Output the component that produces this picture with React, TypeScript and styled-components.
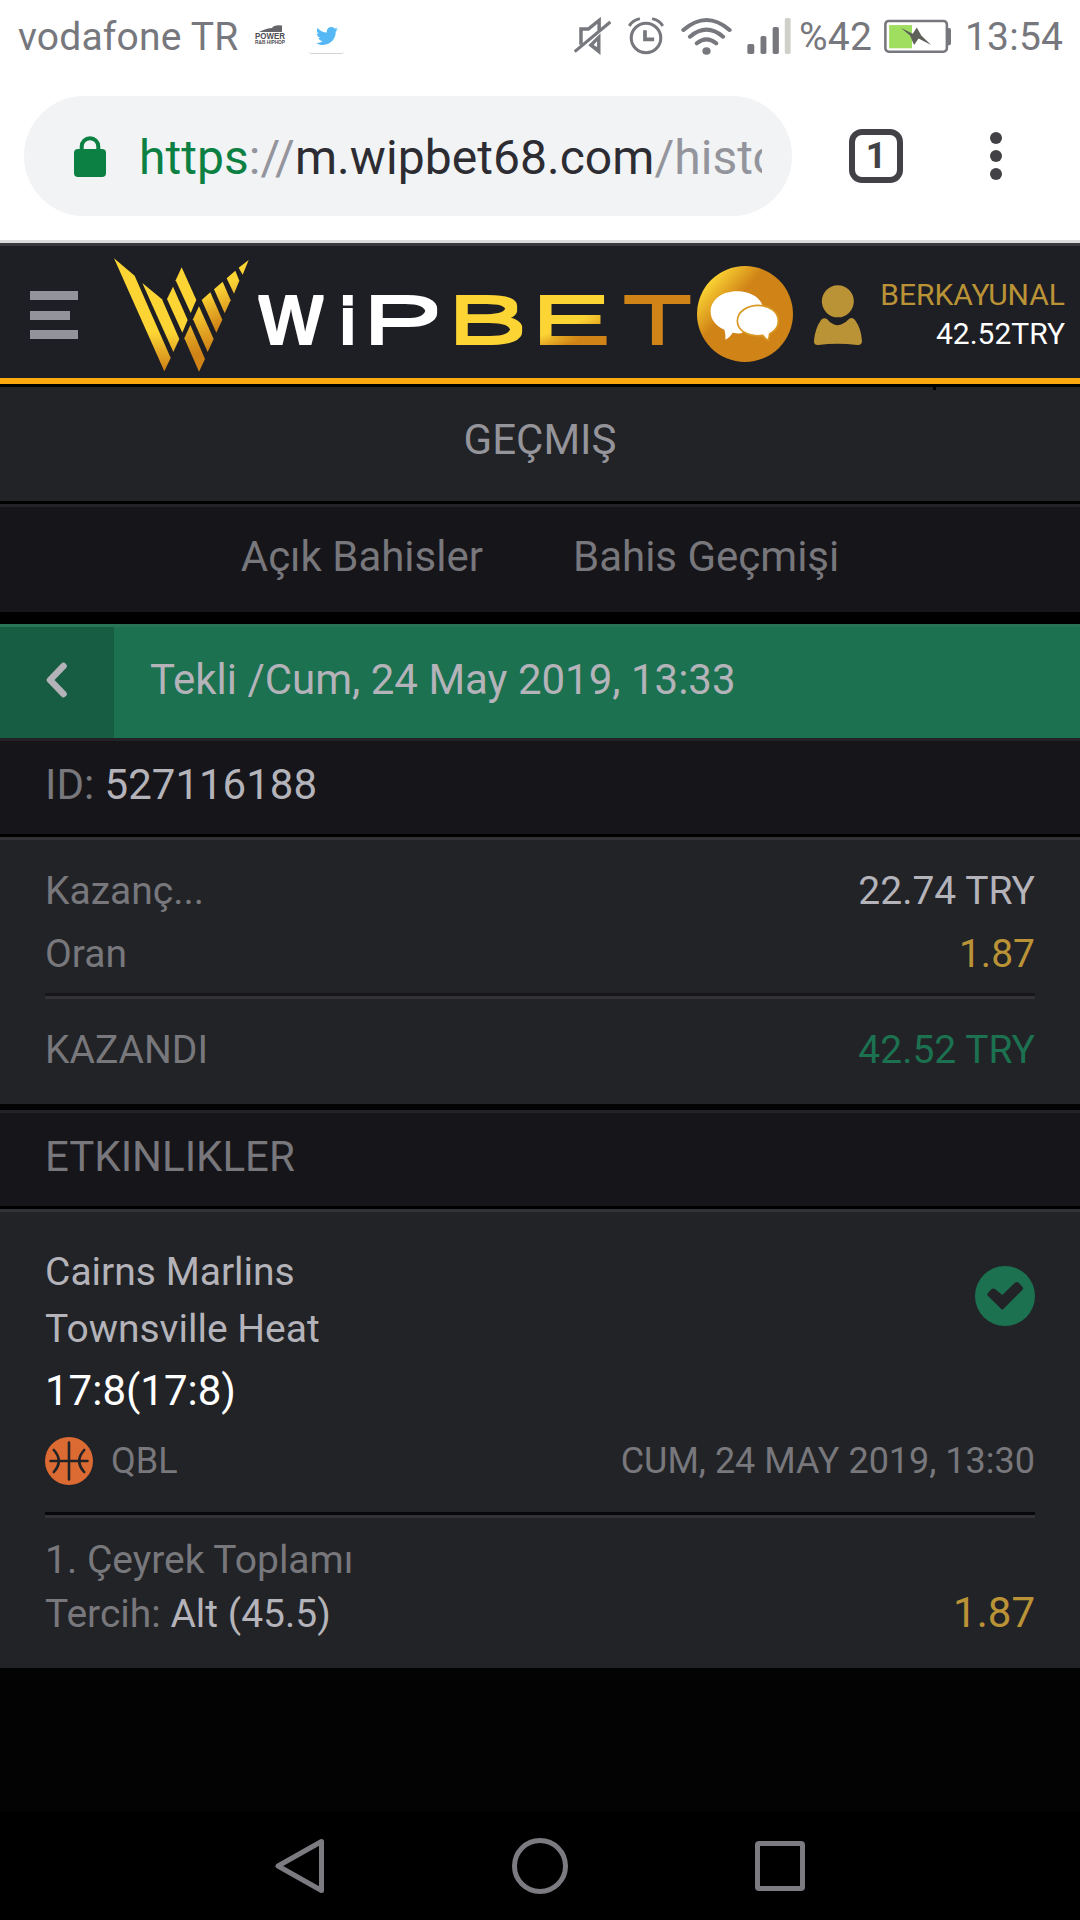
import React from "react";
import styled, { createGlobalStyle } from "styled-components";
import { FaTwitter } from "react-icons/fa";

const color = {
  ink: "#77777c",
  light: "#b4b3ba",
  gold: "#bb9337",
  green: "#1c7150",
  panel: "#222327",
  band: "#16151a",
  edge: "#323237",
  status: "#77787d",
};

const GlobalStyle = createGlobalStyle`
  * { box-sizing: border-box; }
  body { margin: 0; background: #030303; font-family: Roboto, "Liberation Sans", sans-serif; }
  svg { display: block; flex: none; }
`;

const Screen = styled.div`
  width: 1080px;
  height: 1920px;
  display: flex;
  flex-direction: column;
  background: #030303;
  overflow: hidden;
  white-space: nowrap;
`;

/* ---------- phone status bar ---------- */
const StatusBar = styled.div`
  height: 72px;
  display: flex;
  align-items: center;
  background: #fff;
  color: ${color.status};
  font-size: 39px;
  padding-left: 18px;
`;

const StatusItem = styled.div<{ $width: number; $left?: number }>`
  width: ${(p) => p.$width}px;
  margin-left: ${(p) => p.$left ?? 0}px;
  flex: none;
  display: flex;
`;

const StatusText = styled(StatusItem)`
  padding-top: 2px;
  line-height: 48px;
  letter-spacing: 0.2px;
`;

const TwitterTile = styled.div`
  width: 35px;
  height: 35px;
  margin-left: 22px;
  display: flex;
  align-items: center;
  justify-content: center;
  border-bottom: 1px solid #d4d4d4;
  border-radius: 3px;
  color: #55b8f5;
`;

/* ---------- browser bar ---------- */
const BrowserBar = styled.div`
  height: 168px;
  display: flex;
  align-items: center;
  padding-left: 24px;
  background: #fff;
`;

const AddressPill = styled.div`
  width: 768px;
  height: 120px;
  border-radius: 60px;
  background: #f1f3f5;
  display: flex;
  align-items: center;
  padding-left: 50px;
`;

const Address = styled.div`
  width: 623px;
  margin-left: 33px;
  overflow: hidden;
  font-size: 48px;
  line-height: 60px;
  letter-spacing: 0.05px;
  padding-top: 3px;
  color: #94959c;
`;

const Scheme = styled.span`
  color: #0c8043;
`;
const Host = styled.span`
  color: #2c2c32;
`;

const TabCount = styled.div`
  width: 54px;
  height: 54px;
  margin-left: 57px;
  border: 6px solid #424246;
  border-radius: 13px;
  color: #424246;
  font-size: 36px;
  font-weight: 700;
  line-height: 43px;
  text-align: center;
`;

const Dots = styled.div`
  margin-left: 87px;
  display: flex;
  flex-direction: column;
  gap: 6px;
`;
const Dot = styled.i`
  width: 12px;
  height: 12px;
  border-radius: 50%;
  background: #424246;
`;

/* ---------- site header ---------- */
const Header = styled.header`
  height: 147px;
  border-top: 3px solid #dcdcdc;
  border-bottom: 3px solid #000;
  background: linear-gradient(#38383d 3px, #1e1f24 3px, #1e1f24 135px, #fca90f 135px);
  display: flex;
  align-items: flex-start;
  flex: none;
`;

const Menu = styled.div`
  width: 48px;
  margin: 48px 0 0 30px;
  display: flex;
  flex-direction: column;
  gap: 10.5px;
`;
const MenuBar = styled.i<{ $width: number }>`
  width: ${(p) => p.$width}px;
  height: 9px;
  background: #92939b;
`;

const LogoSlot = styled.div`
  margin: -7px 0 0 32px;
`;
const ChatSlot = styled.div`
  margin: 23px 0 0 5px;
`;
const UserSlot = styled.div`
  margin: 42px 0 0 21px;
`;
const Account = styled.div`
  flex: 1;
  margin: 32px 15px 0 0;
  text-align: right;
  font-size: 30px;
  line-height: 39px;
`;
const UserName = styled.div`
  color: ${color.gold};
`;
const Balance = styled.div`
  color: #fff;
`;

/* ---------- bands ---------- */
const PageTitle = styled.h1`
  margin: 0;
  flex: none;
  height: 117px;
  border-bottom: 3px solid #000;
  background: ${color.panel};
  color: #94949a;
  font-size: 42px;
  font-weight: 400;
  line-height: 105px;
  text-align: center;
  position: relative;
  &::after {
    content: "";
    position: absolute;
    left: 933px;
    top: 0;
    width: 3px;
    height: 3px;
    background: #000;
  }
`;

const Tabs = styled.nav`
  height: 120px;
  flex: none;
  border-top: 3px solid #232328;
  border-bottom: 12px solid #000;
  background: ${color.band};
  display: flex;
  justify-content: center;
  gap: 90px;
  color: ${color.ink};
  font-size: 42px;
  line-height: 99px;
`;

const BetBar = styled.div`
  height: 114px;
  flex: none;
  display: flex;
  border-top: 3px solid #297457;
  background: ${color.green};
  color: ${color.light};
  font-size: 42px;
  line-height: 105px;
`;
const Back = styled.div`
  width: 114px;
  height: 111px;
  background: #175d43;
  padding: 34px 0 0 45px;
`;
const BetTitle = styled.div`
  padding-left: 36px;
`;

const Band = styled.div<{ $gap?: number }>`
  height: 99px;
  flex: none;
  margin-top: ${(p) => p.$gap ?? 0}px;
  border-top: 3px solid #222227;
  border-bottom: 3px solid #000;
  background: ${color.band};
  padding-left: 45px;
  color: ${color.ink};
  font-size: 42px;
  line-height: 87px;
`;

const Tone = styled.span<{ $color: string; $size?: number }>`
  color: ${(p) => p.$color};
  ${(p) => p.$size && `font-size: ${p.$size}px;`}
`;

const Panel = styled.section<{ $height: number; $top: number }>`
  height: ${(p) => p.$height}px;
  flex: none;
  padding: ${(p) => p.$top}px 45px 0;
  border-top: 3px solid ${color.edge};
  background: ${color.panel};
  color: ${color.ink};
  font-size: 39px;
`;

const Row = styled.div<{ $line: number }>`
  display: flex;
  justify-content: space-between;
  align-items: baseline;
  height: ${(p) => p.$line}px;
  line-height: ${(p) => p.$line}px;
`;

const Rule = styled.div<{ $dark: string; $before: number; $after: number }>`
  height: 6px;
  margin: ${(p) => p.$before}px 0 ${(p) => p.$after}px;
  border-top: 3px solid ${(p) => p.$dark};
  border-bottom: 3px solid ${color.edge};
`;

const Match = styled.div`
  display: flex;
  justify-content: space-between;
  height: 193px;
  color: ${color.light};
`;
const Team = styled.div`
  line-height: 57px;
`;
const Score = styled.div`
  color: #fff;
  font-size: 42px;
  line-height: 65px;
`;
const WonMark = styled.div`
  padding-top: 22px;
`;
const League = styled.div`
  height: 48px;
  display: flex;
  align-items: center;
  justify-content: space-between;
  font-size: 36px;
`;
const LeagueName = styled.div`
  display: flex;
  align-items: center;
  gap: 18px;
`;

const NavBar = styled.footer`
  margin-top: auto;
  height: 108px;
  flex: none;
  background: #000;
  display: flex;
  align-items: center;
  justify-content: center;
  gap: 184px;
`;

/* ---------- drawings ---------- */
const MuteIcon = () => (
  <svg width="37" height="40" viewBox="98 48 106 120" preserveAspectRatio="none" fill="none" stroke={color.status} strokeWidth="10">
    <path d="M118 134V87h21l31-26v31" />
    <path d="M100 155L202 66" strokeWidth="9" />
    <path d="M139 136l35 29v-65z" fill={color.status} stroke="none" />
    <path d="M154 135l10-11v17z" fill="#fff" stroke="none" />
  </svg>
);

const AlarmIcon = () => (
  <svg width="36" height="40" viewBox="254 48 106 120" preserveAspectRatio="none" fill="none" stroke={color.status} strokeWidth="9">
    <ellipse cx="307" cy="114" rx="43.500" ry="44" />
    <path d="M258 78q8-16 31-22M356 78q-8-16-31-22" />
    <path d="M304 91v27h27" strokeWidth="11" />
  </svg>
);

const WifiIcon = () => (
  <svg width="51" height="40" viewBox="408 48 148 120" preserveAspectRatio="none" fill="none" stroke={color.status} strokeWidth="12" strokeLinecap="round">
    <path d="M415 90Q482 30 549 90M434 110Q482 68 530 110M454 130Q482 106 510 130" />
    <ellipse cx="482" cy="153" rx="12" ry="11.500" fill={color.status} stroke="none" />
  </svg>
);

const SignalIcon = () => (
  <svg width="44" height="40" viewBox="600 48 127 120" preserveAspectRatio="none" fill={color.status}>
    <rect x="601" y="132" width="20" height="30" rx="5" />
    <rect x="639" y="108" width="17" height="54" rx="5" />
    <rect x="674" y="81" width="18" height="81" rx="5" />
    <rect x="709" y="54" width="17" height="108" rx="5" fill="#d0d0cb" />
  </svg>
);

const BatteryIcon = () => (
  <svg width="67" height="34" viewBox="998 60 196 101" preserveAspectRatio="none">
    <rect x="1002" y="66" width="180" height="91" rx="10" fill="none" stroke={color.status} strokeWidth="7.500" />
    <path d="M1185 87h4q5 0 5 6v39q0 6-5 6h-4z" fill={color.status} />
    <path d="M1013 78h67v69h-67z" fill="#a0de60" />
    <path d="M1047 86l35 18 12-19 13 24 29 28-37-19-13 19-12-28z" fill="#5d615a" />
  </svg>
);

const RadioIcon = () => (
  <svg width="33" height="24" viewBox="-1 0 33 24" fill="#4c4c50" fontFamily="Liberation Sans, sans-serif" fontWeight="700">
    <path d="M4 8Q12 4 17 4Q19 .5 27 1.500V8H4z" fill="#66666a" />
    <text x="0" y="14.500" fontSize="9.500" textLength="30" lengthAdjust="spacingAndGlyphs" stroke="#fff" strokeWidth="1" paintOrder="stroke">POWER</text>
    <text x="0" y="20" fontSize="5.500" textLength="30" lengthAdjust="spacingAndGlyphs">R&amp;B HIPHOP</text>
  </svg>
);

const LockIcon = () => (
  <svg width="32" height="43" viewBox="0 0 32 43">
    <path d="M7.700 16V11.500a8.300 8.300 0 0 1 16.600 0V16" fill="none" stroke="#0c8043" strokeWidth="4" />
    <rect y="14" width="32" height="28" rx="4" fill="#0c8043" />
  </svg>
);

/* Striped W emblem and wordmark, drawn on a grid of three units to a pixel */
const letters = [
  { ch: "W", x: 775, sx: 1.04, size: 200, weight: 700, fill: "#fff" },
  { ch: "i", x: 1014, sx: 1.12, size: 190, weight: 700, fill: "#fff" },
  { ch: "P", x: 1083, sx: 1.86, size: 200, weight: 400, fill: "#fff" },
  { ch: "B", x: 1338, sx: 1.86, size: 200, weight: 400, fill: "#fcd535" },
  { ch: "E", x: 1590, sx: 1.84, size: 200, weight: 400, fill: "url(#fade)" },
  { ch: "T", x: 1865, sx: 1.75, size: 200, weight: 400, fill: "#d08316" },
];

const Logo = () => (
  <svg width="582" height="142" viewBox="330 0 1746 426">
    <defs>
      <linearGradient id="emblem" gradientUnits="userSpaceOnUse" x1="575" y1="210" x2="615" y2="345">
        <stop offset="0" stopColor="#fcd535" />
        <stop offset="1" stopColor="#d08316" />
      </linearGradient>
      <linearGradient id="stripe" gradientUnits="userSpaceOnUse" x1="0" y1="290" x2="0" y2="400">
        <stop offset="0" stopColor="#fcd535" />
        <stop offset="1" stopColor="#d08316" />
      </linearGradient>
      <linearGradient id="rise" gradientUnits="userSpaceOnUse" x1="620" y1="170" x2="668" y2="270">
        <stop offset="0" stopColor="#fcd535" />
        <stop offset="1" stopColor="#d08316" />
      </linearGradient>
      <linearGradient id="fade" gradientUnits="userSpaceOnUse" x1="78" y1="-70" x2="106" y2="-30">
        <stop offset="0" stopColor="#fcd535" />
        <stop offset="1" stopColor="#d08316" />
      </linearGradient>
      <filter id="heavy" x="-5%" y="-10%" width="110%" height="120%">
        <feMorphology operator="dilate" radius="0.01 6" />
      </filter>
    </defs>
    <path d="M342 67L404 119L512 366L493 406z" fill="url(#stripe)" />
    <path d="M427 141L486 190L538 309L520 348z" fill="url(#stripe)" />
    <path d="M519 152L563 252L547 290L501 189z" fill="#fcd535" />
    <path d="M545 94L589 192L572 231L527 133z" fill="#fcd535" />
    <path d="M571 267L615 369L597 407L553 307z" fill="url(#emblem)" />
    <path d="M597 211L641 309L623 348L579 250z" fill="url(#emblem)" />
    <path d="M605 192L631 169L667 251L649 290z" fill="url(#rise)" />
    <path d="M642 160L668 137L692 193L674 232z" fill="url(#rise)" />
    <path d="M680 127L706 104L718 134L702 173z" fill="url(#rise)" />
    <path d="M716 95L746 72L728 116z" fill="#fcd535" />
    <g filter="url(#heavy)" fontFamily="Liberation Sans, sans-serif">
      {letters.map((l) => (
        <text key={l.ch} transform={`translate(${l.x} 320) scale(${l.sx} 1)`} fontSize={l.size} fontWeight={l.weight} fill={l.fill}>
          {l.ch}
        </text>
      ))}
    </g>
  </svg>
);

const ChatIcon = () => (
  <svg width="96" height="96" viewBox="891 90 288 288">
    <defs>
      <linearGradient id="coin" x1="0" y1=".1" x2=".8" y2=".8">
        <stop offset=".12" stopColor="#fcd535" />
        <stop offset=".45" stopColor="#d08316" />
      </linearGradient>
    </defs>
    <circle cx="1035" cy="234" r="144" fill="url(#coin)" />
    <path d="M1010 166c44 0 78 22 80 55l-65 71c-9 1-19 0-27-2-6 9-13 17-22 21 1-10 0-20-3-30-25-12-41-30-41-54 0-35 34-61 78-61z" fill="#fff" />
    <path d="M1075 208c34 0 60 20 60 47 0 16-10 30-26 38-1 7-2 13-4 20-8-3-13-9-17-15-42 6-76-14-76-43 0-27 29-47 63-47z" fill="#fff" stroke="#d99a24" strokeWidth="5" />
  </svg>
);

const UserIcon = () => (
  <svg width="48" height="61" viewBox="403 146 144 183" fill={color.gold}>
    <circle cx="474.500" cy="195" r="48" />
    <path d="M424 251q7-9 18-3q30 37 66 0q10-7 18 3q19 26 21 64q0 12-14 11q-60-8-117 0q-14 1-13-13q3-36 21-62z" />
  </svg>
);

const BackIcon = () => (
  <svg width="24" height="38" viewBox="0 0 24 38" fill="none" stroke={color.light} strokeWidth="6.500" strokeLinecap="round" strokeLinejoin="round">
    <path d="M18.500 5L5 19l13.500 14" />
  </svg>
);

const CheckIcon = () => (
  <svg width="60" height="60" viewBox="825 138 180 180">
    <circle cx="915" cy="228" r="90" fill={color.green} />
    <path d="M864 219l10-11q5-5 11-1l22 18 37-36q6-6 12-1l11 12q5 5 0 10l-56 56q-4 5-8 0l-39-38q-5-4 0-9z" fill={color.panel} />
  </svg>
);

const BallIcon = () => (
  <svg width="48" height="48" viewBox="0 0 48 48" fill="none" stroke={color.panel} strokeWidth="2.600" strokeLinecap="round">
    <circle cx="24" cy="24" r="24" fill="#dc6b33" stroke="none" />
    <path d="M24 5.500v37M5.500 24h37M8.800 13q10 11 0 22M39.200 13q-10 11 0 22" />
  </svg>
);

const App = () => (
  <Screen>
    <GlobalStyle />
    <StatusBar>
      <StatusText $width={222}>vodafone TR</StatusText>
      <StatusItem $width={33} $left={14}><RadioIcon /></StatusItem>
      <TwitterTile><FaTwitter size={22} /></TwitterTile>
      <StatusItem $width={37} $left={230}><MuteIcon /></StatusItem>
      <StatusItem $width={36} $left={17}><AlarmIcon /></StatusItem>
      <StatusItem $width={51} $left={17}><WifiIcon /></StatusItem>
      <StatusItem $width={44} $left={15}><SignalIcon /></StatusItem>
      <StatusText $width={76} $left={8}>%42</StatusText>
      <StatusItem $width={67} $left={9}><BatteryIcon /></StatusItem>
      <StatusText $width={100} $left={14}>13:54</StatusText>
    </StatusBar>

    <BrowserBar>
      <AddressPill>
        <LockIcon />
        <Address><Scheme>https</Scheme>://<Host>m.wipbet68.com</Host>/histo</Address>
      </AddressPill>
      <TabCount>1</TabCount>
      <Dots><Dot /><Dot /><Dot /></Dots>
    </BrowserBar>

    <Header>
      <Menu>
        <MenuBar $width={48} />
        <MenuBar $width={40} />
        <MenuBar $width={48} />
      </Menu>
      <LogoSlot><Logo /></LogoSlot>
      <ChatSlot><ChatIcon /></ChatSlot>
      <UserSlot><UserIcon /></UserSlot>
      <Account>
        <UserName>BERKAYUNAL</UserName>
        <Balance>42.52TRY</Balance>
      </Account>
    </Header>

    <PageTitle>GEÇMIŞ</PageTitle>
    <Tabs>
      <span>Açık Bahisler</span>
      <span>Bahis Geçmişi</span>
    </Tabs>

    <BetBar>
      <Back><BackIcon /></Back>
      <BetTitle>Tekli /Cum, 24 May 2019, 13:33</BetTitle>
    </BetBar>
    <Band>ID: <Tone $color={color.light}>527116188</Tone></Band>

    <Panel $height={267} $top={20}>
      <Row $line={63}><span>Kazanç...</span><Tone $color={color.light}>22.74 TRY</Tone></Row>
      <Row $line={63}><span>Oran</span><Tone $color={color.gold}>1.87</Tone></Row>
      <Rule $dark="#17161b" $before={7} $after={20} />
      <Row $line={63}><span>KAZANDI</span><Tone $color={color.green}>42.52 TRY</Tone></Row>
    </Panel>

    <Band $gap={6}>ETKINLIKLER</Band>
    <Panel $height={459} $top={32}>
      <Match>
        <div>
          <Team>Cairns Marlins</Team>
          <Team>Townsville Heat</Team>
          <Score>17:8(17:8)</Score>
        </div>
        <WonMark><CheckIcon /></WonMark>
      </Match>
      <League>
        <LeagueName><BallIcon />QBL</LeagueName>
        <span>CUM, 24 MAY 2019, 13:30</span>
      </League>
      <Rule $dark="#08070c" $before={27} $after={15} />
      <Row $line={54}>1. Çeyrek Toplamı</Row>
      <Row $line={52}>
        <span>Tercih: <Tone $color={color.light}>Alt (45.5)</Tone></span>
        <Tone $color={color.gold} $size={42}>1.87</Tone>
      </Row>
    </Panel>

    <NavBar>
      <svg width="54" height="60" viewBox="0 0 54 60" fill="none" stroke="#7b7b81" strokeWidth="5" strokeLinejoin="round">
        <path d="M5 30L48.500 5.500v49z" />
      </svg>
      <svg width="58" height="60" viewBox="0 0 58 60" fill="none" stroke="#7b7b81" strokeWidth="5">
        <circle cx="29" cy="30" r="25.500" />
      </svg>
      <svg width="54" height="60" viewBox="0 0 54 60" fill="none" stroke="#7b7b81" strokeWidth="5">
        <rect x="4.500" y="7.500" width="45" height="45" rx="1.500" />
      </svg>
    </NavBar>
  </Screen>
);

export default App;
